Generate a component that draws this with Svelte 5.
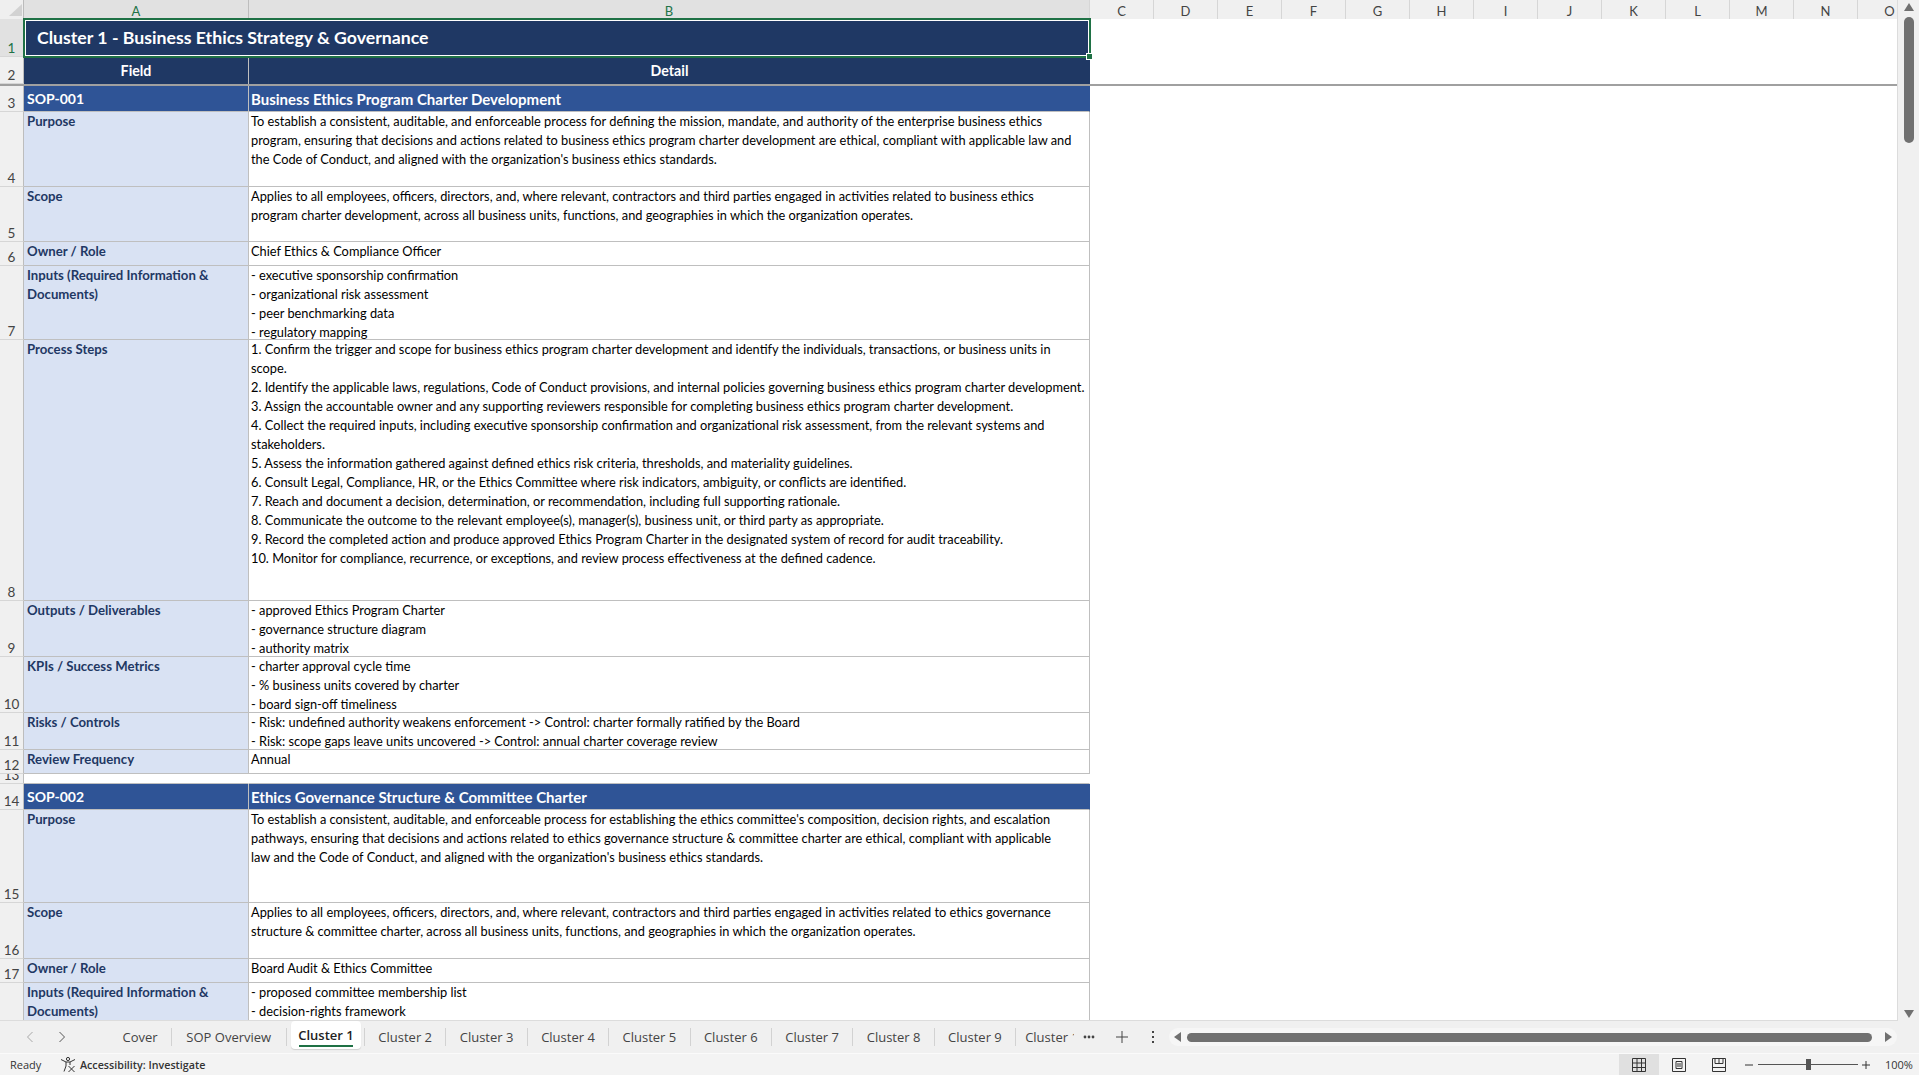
<script>
  const cols = ['C','D','E','F','G','H','I','J','K','L','M','N','O'];
  const rows = [
    { n: 3, h: 26, kind: 'sop', a: 'SOP-001', b: ['Business Ethics Program Charter Development'] },
    { n: 4, h: 75, a: 'Purpose', b: [
      'To establish a consistent, auditable, and enforceable process for defining the mission, mandate, and authority of the enterprise business ethics',
      'program, ensuring that decisions and actions related to business ethics program charter development are ethical, compliant with applicable law and',
      "the Code of Conduct, and aligned with the organization's business ethics standards."] },
    { n: 5, h: 55, a: 'Scope', b: [
      'Applies to all employees, officers, directors, and, where relevant, contractors and third parties engaged in activities related to business ethics',
      'program charter development, across all business units, functions, and geographies in which the organization operates.'] },
    { n: 6, h: 24, a: 'Owner / Role', b: ['Chief Ethics & Compliance Officer'] },
    { n: 7, h: 74, a: ['Inputs (Required Information &', 'Documents)'], b: [
      '- executive sponsorship confirmation', '- organizational risk assessment', '- peer benchmarking data', '- regulatory mapping'] },
    { n: 8, h: 261, a: 'Process Steps', b: [
      '1. Confirm the trigger and scope for business ethics program charter development and identify the individuals, transactions, or business units in',
      'scope.',
      '2. Identify the applicable laws, regulations, Code of Conduct provisions, and internal policies governing business ethics program charter development.',
      '3. Assign the accountable owner and any supporting reviewers responsible for completing business ethics program charter development.',
      '4. Collect the required inputs, including executive sponsorship confirmation and organizational risk assessment, from the relevant systems and',
      'stakeholders.',
      '5. Assess the information gathered against defined ethics risk criteria, thresholds, and materiality guidelines.',
      '6. Consult Legal, Compliance, HR, or the Ethics Committee where risk indicators, ambiguity, or conflicts are identified.',
      '7. Reach and document a decision, determination, or recommendation, including full supporting rationale.',
      '8. Communicate the outcome to the relevant employee(s), manager(s), business unit, or third party as appropriate.',
      '9. Record the completed action and produce approved Ethics Program Charter in the designated system of record for audit traceability.',
      '10. Monitor for compliance, recurrence, or exceptions, and review process effectiveness at the defined cadence.'] },
    { n: 9, h: 56, a: 'Outputs / Deliverables', b: ['- approved Ethics Program Charter', '- governance structure diagram', '- authority matrix'] },
    { n: 10, h: 56, a: 'KPIs / Success Metrics', b: ['- charter approval cycle time', '- % business units covered by charter', '- board sign-off timeliness'] },
    { n: 11, h: 37, a: 'Risks / Controls', b: [
      '- Risk: undefined authority weakens enforcement -> Control: charter formally ratified by the Board',
      '- Risk: scope gaps leave units uncovered -> Control: annual charter coverage review'] },
    { n: 12, h: 24, a: 'Review Frequency', b: ['Annual'] },
    { n: 13, h: 10, kind: 'blank', a: '', b: [] },
    { n: 14, h: 26, kind: 'sop', a: 'SOP-002', b: ['Ethics Governance Structure & Committee Charter'] },
    { n: 15, h: 93, a: 'Purpose', b: [
      "To establish a consistent, auditable, and enforceable process for establishing the ethics committee's composition, decision rights, and escalation",
      'pathways, ensuring that decisions and actions related to ethics governance structure & committee charter are ethical, compliant with applicable',
      "law and the Code of Conduct, and aligned with the organization's business ethics standards."] },
    { n: 16, h: 56, a: 'Scope', b: [
      'Applies to all employees, officers, directors, and, where relevant, contractors and third parties engaged in activities related to ethics governance',
      'structure & committee charter, across all business units, functions, and geographies in which the organization operates.'] },
    { n: 17, h: 24, a: 'Owner / Role', b: ['Board Audit & Ethics Committee'] },
    { n: 18, h: 74, a: ['Inputs (Required Information &', 'Documents)'], b: ['- proposed committee membership list', '- decision-rights framework', '- ethics charter template', '- benchmark review'] }
  ].map((r) => ({ ...r, a: Array.isArray(r.a) ? r.a : [r.a] }));
  const plainTabs = ['Cluster 2','Cluster 3','Cluster 4','Cluster 5','Cluster 6','Cluster 7','Cluster 8','Cluster 9','Cluster 10'];
</script>

<div class="window">
  <div class="main">
    <div class="sheet">
      <div class="colhead">
        <div class="corner"><svg width="24" height="19" viewBox="0 0 24 19"><path d="M9 16 L22 16 L22 4 Z" fill="#d2d2d2"/></svg></div>
        <div class="colname sel cola">A</div>
        <div class="colname sel colb">B</div>
        {#each cols as c}<div class="colname other">{c}</div>{/each}
      </div>

      <div class="row title-row">
        <div class="num sel-num"><span>1</span></div>
        <div class="merged">
          <span>Cluster 1 - Business Ethics Strategy &amp; Governance</span>
          <i class="handle"></i>
        </div>
        <div class="rest"></div>
      </div>

      <div class="row head-row">
        <div class="num"><span>2</span></div>
        <div class="a">Field</div>
        <div class="b">Detail</div>
        <div class="rest"></div>
      </div>

      {#each rows as r}
        <div class="row {r.kind ?? 'body'}" style="height:{r.h}px">
          <div class="num"><span>{r.n}</span></div>
          <div class="a">{#each r.a as l}<div class="line">{l}</div>{/each}</div>
          <div class="b">{#each r.b as l}<div class="line">{l}</div>{/each}</div>
          <div class="rest"></div>
        </div>
      {/each}
    </div>

    <div class="vbar">
      <svg class="up" width="10" height="8" viewBox="0 0 10 8"><path d="M5 0 L10 8 L0 8 Z" fill="#707070"/></svg>
      <div class="vthumb"></div>
      <div class="vspace"></div>
      <svg class="down" width="10" height="8" viewBox="0 0 10 8"><path d="M5 8 L10 0 L0 0 Z" fill="#707070"/></svg>
    </div>
  </div>

  <div class="tabbar">
    <div class="nav">
      <svg width="8" height="12" viewBox="0 0 8 12"><path d="M6.5 1 L1.5 6 L6.5 11" fill="none" stroke="#a8a8a8" stroke-width="1"/></svg>
      <svg width="8" height="12" viewBox="0 0 8 12"><path d="M1.5 1 L6.5 6 L1.5 11" fill="none" stroke="#555" stroke-width="1"/></svg>
    </div>
    <div class="tabs">
      <div class="tab cover">Cover</div>
      <div class="tab overview">SOP Overview</div>
      <div class="tab active"><span class="pill"><span class="pilltext">Cluster 1</span></span></div>
      {#each plainTabs as t}<div class="tab">{t}</div>{/each}
    </div>
    <div class="more">
      <svg width="12" height="4" viewBox="0 0 12 4"><circle cx="2" cy="2" r="1.4" fill="#444"/><circle cx="6" cy="2" r="1.4" fill="#444"/><circle cx="10" cy="2" r="1.4" fill="#444"/></svg>
    </div>
    <div class="plus">
      <svg width="12" height="12" viewBox="0 0 12 12"><path d="M6 0 V12 M0 6 H12" stroke="#444" stroke-width="1" fill="none"/></svg>
    </div>
    <div class="kebab">
      <svg width="3" height="12" viewBox="0 0 3 12"><rect y="0" width="2" height="2" fill="#444"/><rect y="5" width="2" height="2" fill="#444"/><rect y="10" width="2" height="2" fill="#444"/></svg>
    </div>
    <div class="htrack">
      <svg width="7" height="10" viewBox="0 0 7 10"><path d="M0 5 L7 0 L7 10 Z" fill="#707070"/></svg>
      <div class="hthumb"></div>
      <svg width="7" height="10" viewBox="0 0 7 10"><path d="M7 5 L0 0 L0 10 Z" fill="#707070"/></svg>
    </div>
  </div>

  <div class="status">
    <span class="ready">Ready</span>
    <span class="acc">
      <svg width="17" height="17" viewBox="0 0 17 17" fill="none" stroke="#333" stroke-width="1">
        <circle cx="8" cy="3" r="1.6"/>
        <path d="M1 3.5 L6 6 H10 L15 3.5"/>
        <path d="M6 6 V10 L4 15.5 M10 6 V9"/>
        <path d="M8.5 10 L14.5 16 M14.5 10 L8.5 16"/>
      </svg>
      <b>Accessibility: Investigate</b>
    </span>
    <div class="views">
      <span class="view on">
        <svg width="14" height="14" viewBox="0 0 14 14" fill="none" stroke="#333"><path d="M.5.5h13v13H.5z M.5 5h13 M.5 9.5h13 M5 .5v13 M9.5.5v13"/></svg>
      </span>
      <span class="view">
        <svg width="14" height="14" viewBox="0 0 14 14" fill="none" stroke="#333"><path d="M.5.5h13v13H.5z M4 3.5h6v7H4z M5 6h4 M5 8h4"/></svg>
      </span>
      <span class="view">
        <svg width="14" height="14" viewBox="0 0 14 14" fill="none" stroke="#333"><path d="M.5.5h13v13H.5z M.5 9.5h13 M3 .5v5h8v-5 M7 .5v5"/></svg>
      </span>
    </div>
    <div class="zoom">
      <span class="zm"><svg width="8" height="8" viewBox="0 0 8 8"><path d="M0 4H8" stroke="#333"/></svg></span>
      <span class="slider"><i></i></span>
      <span class="zm"><svg width="8" height="8" viewBox="0 0 8 8"><path d="M0 4H8M4 0V8" stroke="#333"/></svg></span>
      <span class="pct">100%</span>
    </div>
  </div>
</div>

<style>
  :global(body) { margin: 0; background: #fff; }
  .window {
    width: 1919px; height: 1075px; overflow: hidden;
    display: flex; flex-direction: column;
    font-family: Lato, "Liberation Sans", sans-serif; color: #000;
    background: #f0f0f0;
  }
  .main { height: 1021px; display: flex; flex: none; }
  .sheet { flex: 1; min-width: 0; overflow: hidden; background: #fff; border-right: 1px solid #dcdcdc; border-bottom: 1px solid #dcdcdc; }

  .colhead { display: flex; height: 19px; background: #f0f0f0; }
  .corner { width: 24px; flex: none; border-right: 1px solid #bbb; box-sizing: border-box; background: #efefef; }
  .colname {
    flex: none; box-sizing: border-box; border-right: 1px solid #d6d6d6;
    display: flex; justify-content: center; align-items: flex-end;
    font-size: 13px; line-height: 16px; color: #444;
  }
  .colname.sel { background: #e1e1e1; color: #217346; }
  .cola { width: 225px; border-right-color: #bdbdbd; }
  .colb { width: 841px; }
  .other { width: 64px; }

  .row { display: flex; overflow: hidden; flex: none; }
  .title-row { height: 38px; overflow: visible; position: relative; z-index: 2; }
  .head-row { height: 29px; border-bottom: 2px solid #a0a0a0; box-sizing: border-box; }

  .num {
    width: 24px; flex: none; box-sizing: border-box;
    background: #f0f0f0; border-right: 1px solid #bdbdbd; border-bottom: 1px solid #d6d6d6;
    display: flex; justify-content: center; align-items: flex-end;
    font-size: 13.5px; line-height: 16px; color: #444;
  }
  .sel-num { background: #e1e1e1; color: #217346; }

  .merged {
    position: relative; flex: none; width: 1068px; height: 39.5px; margin: -1px 0 0 -1px; box-sizing: border-box;
    background: #1f3864; color: #fff; border: 2px solid #1f7145; box-shadow: inset 0 0 0 1px #fff;
    display: flex; align-items: center; padding-left: 12px;
    font-size: 17.7px; font-weight: 700;
  }
  .handle { position: absolute; right: -4px; bottom: -4px; width: 5px; height: 5px; background: #1f7145; border: 1px solid #fff; }

  .a, .b { flex: none; box-sizing: border-box; line-height: 19px; white-space: pre; border-bottom: 1px solid #bfbfbf; border-right: 1px solid #bfbfbf; }
  .a { width: 225px; padding: 0 0 0 3px; background: #d9e2f3; color: #1f3864; font-weight: 700; font-size: 13.2px; }
  .b { width: 841px; padding: 0 0 0 2px; background: #fff; overflow: hidden; font-size: 12.8px; }
  .rest { flex: 1; background: #fff; }

  .head-row .a, .head-row .b {
    background: #1f3864; color: #fff; font-weight: 700; text-align: center; font-size: 14.2px;
    line-height: 27px; padding: 0; border-bottom: 0; border-right-color: #bfbfbf;
  }
  .head-row .b { border-right: 0; }

  .sop .a, .sop .b {
    background: #2f5496; color: #fff; font-weight: 700; line-height: 26px; padding-top: 0;
  }
  .sop .a { padding-left: 3px; font-size: 14px; }
  .sop .b { padding-left: 2px; font-size: 15px; border-right-color: #2f5496; }

  .blank .a, .blank .b { background: #fff; border-right-color: #fff; }

  .vbar { width: 21px; flex: none; background: #f0f0f0; display: flex; flex-direction: column; align-items: center; }
  .vbar .up { margin-top: 3px; flex: none; }
  .vthumb { width: 10px; height: 126px; margin-top: 6px; border-radius: 5px; background: #707070; flex: none; }
  .vspace { flex: 1; }
  .vbar .down { margin-bottom: 3px; flex: none; }

  .tabbar { height: 32px; flex: none; display: flex; align-items: center; background: #f0f0f0; font-family: "Open Sans", "Liberation Sans", sans-serif; font-size: 13px; color: #444; }
  .nav { width: 109px; flex: none; display: flex; gap: 24px; padding-left: 26px; box-sizing: border-box; }
  .tabs { width: 964.5px; flex: none; display: flex; overflow: hidden; height: 100%; align-items: center; }
  .tab { flex: none; width: 81.4px; height: 18px; display: flex; align-items: center; justify-content: center; border-right: 1px solid #d2d2d2; box-sizing: border-box; white-space: nowrap; }
  .cover { width: 63px; }
  .overview { width: 114.5px; }
  .active { width: 78.5px; position: relative; }
  .pill { position: absolute; left: 4.5px; top: -7px; width: 70px; height: 28px; background: #fff; border-radius: 4px; box-shadow: 0 1px 1px #d0d0d0; display: flex; flex-direction: column; align-items: center; }
  .pilltext { font-weight: 600; color: #222; line-height: 20px; padding-top: 3.5px; border-bottom: 2px solid #1f7145; width: 54px; text-align: center; height: 20px; white-space: nowrap; display: flex; justify-content: center; }
  .tabs .tab:last-child { border-right: 0; justify-content: flex-start; padding-left: 9px; }
  .more { width: 31px; flex: none; display: flex; justify-content: center; }
  .plus { width: 34px; flex: none; display: flex; justify-content: center; }
  .kebab { width: 30px; flex: none; display: flex; justify-content: center; }
  .htrack { flex: 1; height: 18px; margin-right: 22px; display: flex; align-items: center; gap: 6px; background: #f6f6f6; border-radius: 9px; padding: 0 5px; box-sizing: border-box; }
  .hthumb { flex: 1; height: 9px; background: #707070; border-radius: 5px; margin-right: 7px; }

  .status { flex: 1; display: flex; align-items: center; background: #f3f3f3; border-top: 1px solid #fafafa; box-sizing: border-box; font-family: "Open Sans", "Liberation Sans", sans-serif; font-size: 11px; color: #333; }
  .ready { width: 60px; padding-left: 10px; box-sizing: border-box; flex: none; }
  .acc { display: flex; align-items: center; gap: 3px; flex: 1; }
  .acc b { font-weight: 600; font-size: 10.7px; }
  .views { display: flex; flex: none; height: 100%; }
  .view { width: 40px; height: 100%; display: flex; align-items: center; justify-content: center; }
  .view.on { background: #e0e0e0; }
  .zoom { display: flex; align-items: center; flex: none; width: 180px; padding-left: 4px; box-sizing: border-box; }
  .zm { display: flex; width: 12px; justify-content: center; }
  .slider { position: relative; width: 100px; height: 1px; background: #555; margin: 0 2px 0 3px; }
  .slider i { position: absolute; left: 48px; top: -5px; width: 5px; height: 11px; background: #555; }
  .pct { margin-left: 13px; font-size: 11px; }
</style>
